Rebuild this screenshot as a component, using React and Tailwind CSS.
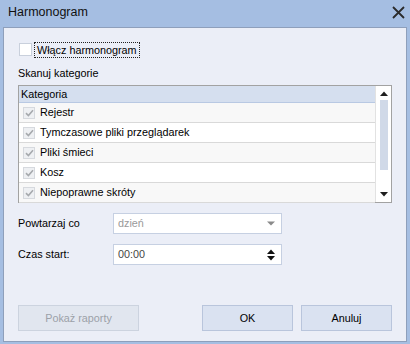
import React from "react";

const font = { fontFamily: '"Liberation Sans", Arial, sans-serif' };

function RowCheck() {
  return (
    <div className="w-[12px] h-[12px] border border-[#d6d9de] bg-[#eef0f3] flex items-center justify-center">
      <svg width="9" height="8" viewBox="0 0 9 8">
        <path d="M1 4.2 L3.4 6.5 L8 1.3" fill="none" stroke="#a6a9ad" strokeWidth="1.6" />
      </svg>
    </div>
  );
}

const rows = [
  "Rejestr",
  "Tymczasowe pliki przeglądarek",
  "Pliki śmieci",
  "Kosz",
  "Niepoprawne skróty",
];

export default function App() {
  return (
    <div
      className="w-[410px] h-[344px] bg-[#a5bee2] flex flex-col text-[10.8px] text-[#000]"
      style={font}
    >
      <div className="h-[27px] shrink-0 flex items-center justify-between pl-[8px] pr-[5px]">
        <span className="text-[12.5px] text-[#111] pb-[2px]">Harmonogram</span>
        <svg width="13" height="13" viewBox="0 0 13 13" className="mb-[2px]">
          <path d="M1 1 L12 12 M12 1 L1 12" stroke="#2b2b2b" strokeWidth="1.8" />
        </svg>
      </div>
      <div className="ml-[3px] mr-[3px] mb-[2px] flex-1 bg-[#ebeef7] border border-[#8e9fbb] flex flex-col pl-[14px] pr-[14px]">
        <div className="flex items-center mt-[14px] h-[15px]">
          <div className="ml-[1px] w-[13px] h-[13px] bg-white border border-[#c9d0dc]"></div>
          <span className="ml-[2px] px-[2px] h-[16px] leading-[14px] border border-dotted border-[#222]">Włącz harmonogram</span>
        </div>
        <div className="mt-[9px] h-[14px] leading-[14px]">Skanuj kategorie</div>
        <div className="mt-[5px] h-[118px] border border-[#a2a2a2] bg-white flex">
          <div className="flex-1 flex flex-col">
            <div className="h-[17px] shrink-0 bg-[#d5dfef] border-b border-[#b9c9e3] pl-[2px] leading-[16px]">Kategoria</div>
            {rows.map((r, i) => (
              <div
                key={r}
                className={
                  "h-[20px] shrink-0 flex items-center pl-[4px] border-b border-[#d9d9d9] " +
                  (i % 2 === 0 ? "bg-[#f8f8f8]" : "bg-white")
                }
              >
                <RowCheck />
                <span className="ml-[5px]">{r}</span>
              </div>
            ))}
          </div>
          <div className="w-[16px] border-l border-[#e2e2e2] bg-white flex flex-col items-center">
            <svg width="8" height="5" viewBox="0 0 8 5" className="mt-[5px]">
              <path d="M0 5 L4 0.5 L8 5 Z" fill="#1e1e1e" />
            </svg>
            <div className="w-[8px] h-[70px] mt-[4px] bg-[#d0d9e8]"></div>
            <div className="flex-1"></div>
            <svg width="8" height="5" viewBox="0 0 8 5" className="mb-[5px]">
              <path d="M0 0 L8 0 L4 4.5 Z" fill="#1e1e1e" />
            </svg>
          </div>
        </div>
        <div className="mt-[10px] flex items-center h-[21px]">
          <span className="w-[95px]">Powtarzaj co</span>
          <div className="w-[169px] h-[21px] bg-white border border-[#c6d0e2] flex items-center justify-between pl-[4px] pr-[6px]">
            <span className="text-[#9a9a9a]">dzień</span>
            <svg width="8" height="5" viewBox="0 0 8 5">
              <path d="M0 0.5 L8 0.5 L4 4.5 Z" fill="#8a8a8a" />
            </svg>
          </div>
        </div>
        <div className="mt-[10px] flex items-center h-[21px]">
          <span className="w-[95px]">Czas start:</span>
          <div className="w-[169px] h-[21px] bg-white border border-[#c6d0e2] flex items-center justify-between pl-[4px] pr-[6px]">
            <span className="text-[#444]">00:00</span>
            <div className="flex flex-col items-center gap-[2px]">
              <svg width="8" height="5" viewBox="0 0 8 5">
                <path d="M0 5 L4 0.5 L8 5 Z" fill="#111" />
              </svg>
              <svg width="8" height="5" viewBox="0 0 8 5">
                <path d="M0 0 L8 0 L4 4.5 Z" fill="#111" />
              </svg>
            </div>
          </div>
        </div>
        <div className="flex-1"></div>
        <div className="mb-[10px] flex items-center h-[26px]">
          <div className="w-[121px] h-[26px] bg-[#e1e6ef] border border-[#ccd3df] flex items-center justify-center text-[#9ca1a8]">
            Pokaż raporty
          </div>
          <div className="flex-1"></div>
          <div className="w-[91px] h-[26px] bg-[#dae2f1] border border-[#b9c5dc] flex items-center justify-center">
            OK
          </div>
          <div className="w-[91px] h-[26px] ml-[8px] bg-[#dae2f1] border border-[#b9c5dc] flex items-center justify-center">
            Anuluj
          </div>
        </div>
      </div>
    </div>
  );
}
